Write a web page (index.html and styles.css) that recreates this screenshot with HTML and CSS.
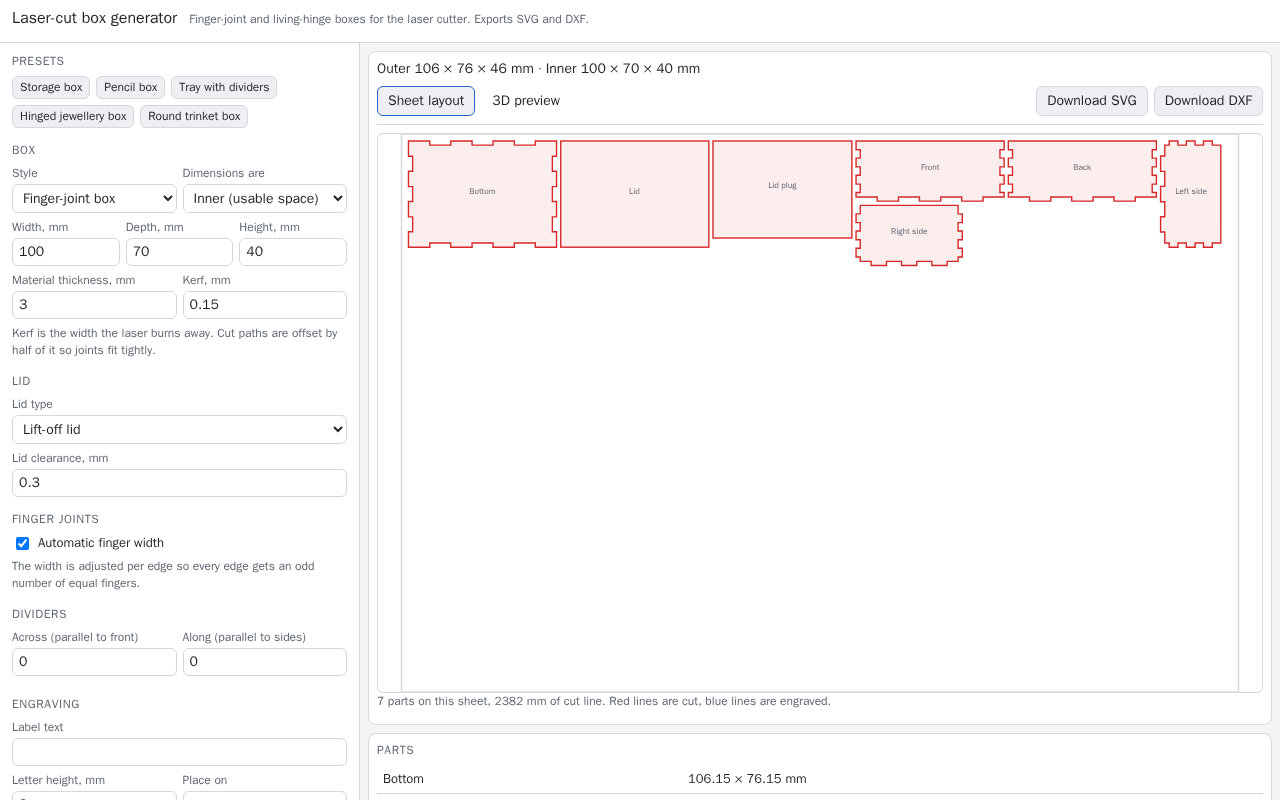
FILE: index.html
```html
<!DOCTYPE html>
<html lang="en">
<head>
<meta charset="utf-8">
<meta name="viewport" content="width=device-width, initial-scale=1">
<title>Laser-cut box generator</title>
<link rel="stylesheet" href="styles.css">
</head>
<body>
<header class="top">
  <h1>Laser-cut box generator</h1>
  <p class="hint">Finger-joint and living-hinge boxes for the laser cutter. Exports SVG and DXF.</p>
</header>
<div class="app">
  <form class="sidebar">
    <section>
      <h2>Presets</h2>
      <div class="chips">
        <button type="button" class="chip">Storage box</button>
        <button type="button" class="chip">Pencil box</button>
        <button type="button" class="chip">Tray with dividers</button>
        <button type="button" class="chip">Hinged jewellery box</button>
        <button type="button" class="chip">Round trinket box</button>
      </div>
    </section>
    <section>
      <h2>Box</h2>
      <div class="row">
        <label class="field">Style
          <select><option>Finger-joint box</option></select>
        </label>
        <label class="field">Dimensions are
          <select><option>Inner (usable space)</option></select>
        </label>
      </div>
      <div class="row">
        <label class="field">Width, mm <input type="text" inputmode="decimal" value="100"></label>
        <label class="field">Depth, mm <input type="text" inputmode="decimal" value="70"></label>
        <label class="field">Height, mm <input type="text" inputmode="decimal" value="40"></label>
      </div>
      <div class="row">
        <label class="field">Material thickness, mm <input type="text" inputmode="decimal" value="3"></label>
        <label class="field">Kerf, mm <input type="text" inputmode="decimal" value="0.15"></label>
      </div>
      <p class="hint">Kerf is the width the laser burns away. Cut paths are offset by half of it so joints fit tightly.</p>
    </section>
    <section>
      <h2>Lid</h2>
      <label class="field">Lid type
        <select><option>Lift-off lid</option></select>
      </label>
      <label class="field">Lid clearance, mm <input type="text" inputmode="decimal" value="0.3"></label>
    </section>
    <section>
      <h2>Finger joints</h2>
      <label class="check"><input type="checkbox" checked> Automatic finger width</label>
      <p class="hint">The width is adjusted per edge so every edge gets an odd number of equal fingers.</p>
    </section>
    <section>
      <h2>Dividers</h2>
      <div class="row">
        <label class="field">Across (parallel to front) <input type="text" inputmode="numeric" value="0"></label>
        <label class="field">Along (parallel to sides) <input type="text" inputmode="numeric" value="0"></label>
      </div>
      <div class="extra"></div>
    </section>
    <section>
      <h2>Engraving</h2>
      <label class="field">Label text <input type="text"></label>
      <div class="row">
        <label class="field">Letter height, mm <input type="text" inputmode="decimal" value="8"></label>
        <label class="field">Place on
          <select><option>Lid</option></select>
        </label>
      </div>
    </section>
  </form>

  <main class="main">
    <section class="card">
      <p class="summary">Outer 106 × 76 × 46 mm · Inner 100 × 70 × 40 mm</p>
      <div class="toolbar">
        <button type="button" class="btn tab active">Sheet layout</button>
        <button type="button" class="btn tab">3D preview</button>
        <span class="spacer"></span>
        <button type="button" class="btn">Download SVG</button>
        <button type="button" class="btn">Download DXF</button>
      </div>
      <div class="preview">
        <svg viewBox="0 0 600 400" role="img" aria-label="Sheet layout">
          <defs>
            <path id="wall" d="M0 0h106.15v6.3h-3v6h3v6.3h-3v6h3v6.3h-3v6h3v3.25h-15.1v3h-15.3v-3h-15v3h-15.3v-3h-15v3h-15.3v-3H0v-3.25h3v-6h-3v-6.3h3v-6h-3v-6.3h3v-6h-3z"/>
            <path id="side" d="M3 0H73.15v6.1h3v6.3h-3v6h3v6.3h-3v6h3v6.3h-3v3.15H65.3v3h-11v-3H43.55v3h-11v-3H21.8v3h-11v-3H3v-3.15h-3v-6.3h3v-6h-3v-6.3h3v-6h-3v-6.3h3z"/>
          </defs>
          <rect class="sheet" width="600" height="400"/>
          <g class="cut">
            <path d="M5 5h15.3v3h15v-3h15.3v3h15v-3h15.3v3h15v-3h15.25v11h-3v10.7h3v11h-3v10.7h3v11h-3v10.7h3v11.05h-15.25v-3h-15v3h-15.3v-3h-15v3h-15.3v-3h-15v3h-15.3v-11.05h3v-10.7h-3v-11h3v-10.7h-3v-11h3v-10.7h-3z"/>
            <rect x="114.15" y="5" width="106.15" height="76.15"/>
            <rect x="223.3" y="5" width="99.55" height="69.55"/>
            <use href="#wall" x="325.85" y="5"/>
            <use href="#wall" x="435" y="5"/>
            <use href="#side" transform="translate(587.3 5) rotate(90)"/>
            <use href="#side" x="325.85" y="51.15"/>
          </g>
          <g class="names">
            <text x="58" y="43">Bottom</text>
            <text x="167" y="43">Lid</text>
            <text x="273" y="39">Lid plug</text>
            <text x="379" y="26">Front</text>
            <text x="488" y="26">Back</text>
            <text x="566" y="43">Left side</text>
            <text x="364" y="72">Right side</text>
          </g>
        </svg>
      </div>
      <p class="hint">7 parts on this sheet, 2382 mm of cut line. Red lines are cut, blue lines are engraved.</p>
    </section>
    <section class="card parts">
      <h2>Parts</h2>
      <table>
        <tbody>
          <tr><td class="name">Bottom</td><td>106.15 × 76.15 mm</td></tr>
          <tr><td class="name">Lid</td><td>106.15 × 76.15 mm</td></tr>
          <tr><td class="name">Lid plug</td><td>99.55 × 69.55 mm</td></tr>
        </tbody>
      </table>
    </section>
  </main>
</div>
</body>
</html>
```
FILE: styles.css
```css
:root {
  --text: #1f2328;
  --muted: #5f6672;
  --line: #d4d7dc;
  --soft: #eeeff3;
  --accent: #2b62c8;
  --cut: #d62828;
}
* { box-sizing: border-box; }
body {
  margin: 0;
  background: #f3f4f6;
  color: var(--text);
  font: 14px/20px "WenQuanYi Zen Hei", "Liberation Sans", sans-serif;
}
h1, h2, p { margin: 0; font-weight: 400; }
h1 { font-size: 16px; line-height: 22px; }
h2 {
  color: var(--muted);
  font-size: 12px;
  line-height: 17px;
  letter-spacing: 0.05em;
  text-transform: uppercase;
}
button, input, select { font: inherit; color: inherit; }
.hint { color: var(--muted); font-size: 12px; line-height: 17px; }

.top {
  display: flex;
  align-items: baseline;
  gap: 12px;
  padding: 7px 12px 13px;
  background: #fff;
  border-bottom: 1px solid var(--line);
}
.app { display: flex; align-items: stretch; }

.sidebar {
  flex: 0 0 360px;
  display: flex;
  flex-direction: column;
  gap: 14px;
  padding: 10px 12px;
  background: #fff;
  border-right: 1px solid var(--line);
}
.sidebar section { display: flex; flex-direction: column; gap: 6px; }
.chips { display: flex; flex-wrap: wrap; gap: 6px; }
.chip {
  padding: 2px 7px;
  border: 1px solid var(--line);
  border-radius: 6px;
  background: var(--soft);
  font-size: 12px;
  line-height: 17px;
}
.row { display: flex; gap: 6px; }
.field {
  flex: 1 1 0;
  min-width: 0;
  display: flex;
  flex-direction: column;
  gap: 2px;
  color: var(--muted);
  font-size: 12px;
  line-height: 17px;
}
.field input, .field select {
  width: 100%;
  border: 1px solid var(--line);
  border-radius: 6px;
  background: #fff;
  color: var(--text);
  font-size: 14px;
  line-height: 18px;
}
.field input { padding: 4px 6px; }
.field select { padding: 4px 6px; }
.check { display: flex; align-items: center; gap: 6px; font-size: 13px; line-height: 18px; }
.check input { width: 13px; height: 13px; margin: 0 3px 0 4px; }

.main {
  flex: 1;
  min-width: 0;
  display: flex;
  flex-direction: column;
  gap: 8px;
  padding: 8px;
}
.card {
  padding: 8px;
  background: #fff;
  border: 1px solid var(--line);
  border-radius: 8px;
}
.summary { margin-bottom: 8px; line-height: 18px; }
.toolbar {
  display: flex;
  gap: 6px;
  margin-bottom: 8px;
  padding-bottom: 8px;
  border-bottom: 1px solid var(--line);
}
.spacer { flex: 1; }
.btn {
  padding: 4px 10px;
  border: 1px solid var(--line);
  border-radius: 6px;
  background: var(--soft);
}
.tab { border-color: transparent; background: none; }
.tab.active { border-color: var(--accent); background: var(--soft); }
.preview {
  height: 70vh;
  border: 1px solid var(--line);
  border-radius: 6px;
  overflow: hidden;
}
.preview svg { display: block; width: 100%; height: 100%; }
.card .hint { margin-bottom: 6px; }
.sheet { fill: #fff; stroke: var(--line); stroke-width: 1; }
.cut { fill: #fdeeee; stroke: var(--cut); stroke-width: 1; }
.names { fill: var(--muted); font-size: 6px; text-anchor: middle; }

.parts h2 { margin-bottom: 6px; }
table { width: 100%; border-collapse: collapse; table-layout: fixed; font-size: 13px; line-height: 18px; }
td { padding: 5px 6px; border-bottom: 1px solid var(--line); }
.name { width: 305px; }
```
